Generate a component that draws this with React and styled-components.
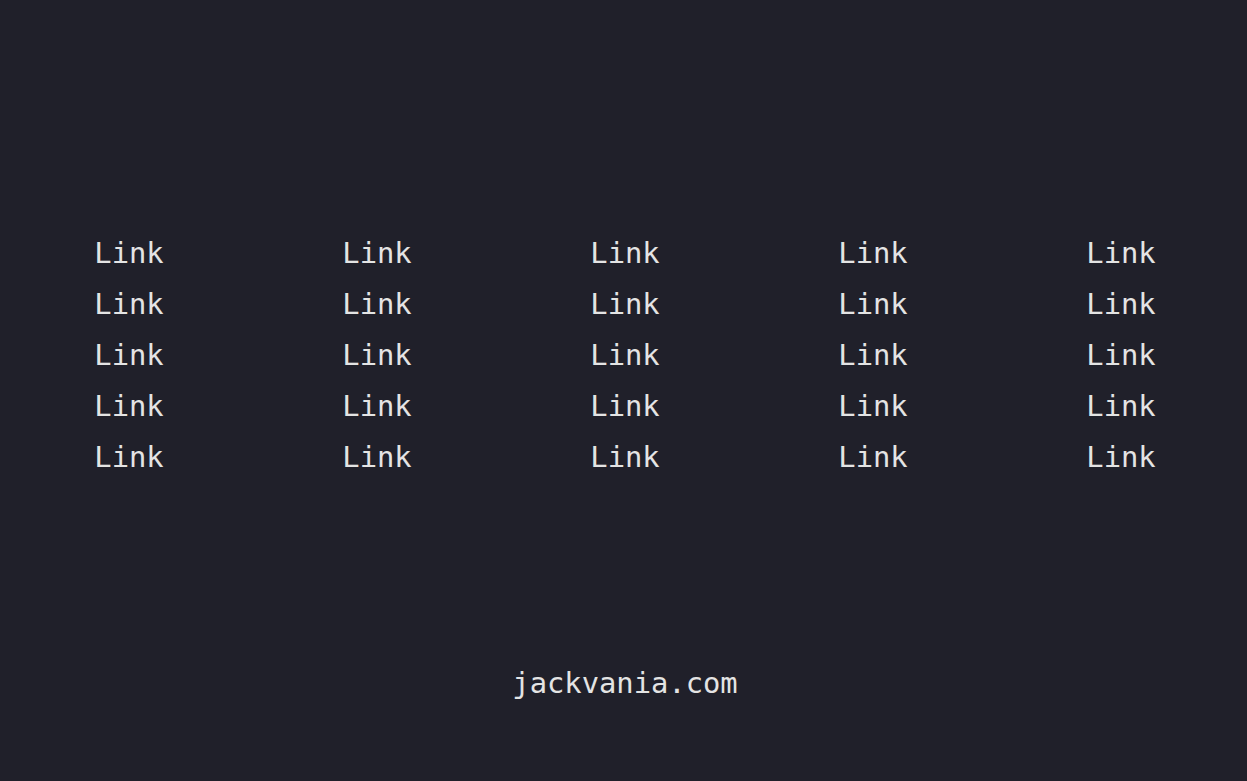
import React from 'react';
import styled, { createGlobalStyle } from 'styled-components';

const GlobalStyle = createGlobalStyle`
  html, body {
    margin: 0;
    padding: 0;
    background: #20202a;
  }
  body {
    font-family: "DejaVu Sans Mono", "Liberation Mono", monospace;
    color: #e4e4e4;
  }
`;

const Page = styled.div`
  min-height: 100vh;
  display: flex;
  flex-direction: column;
  box-sizing: border-box;
`;

const Main = styled.main`
  flex: 1;
  display: flex;
  align-items: center;
  padding-top: 52px;
`;

const LinkGrid = styled.div`
  width: 100%;
  display: grid;
  grid-template-columns: repeat(5, 1fr);
  padding: 0 2px 0 5px;
  box-sizing: border-box;
`;

const LinkItem = styled.a`
  display: block;
  text-align: center;
  font-size: 28.8px;
  line-height: 51px;
  color: #e4e4e4;
  text-decoration: none;
`;

const Footer = styled.footer`
  text-align: center;
  font-size: 28.8px;
  line-height: 51px;
  padding: 0 0 72px 3px;
`;

function App() {
  const links = Array.from({ length: 25 }, (_, i) => i);

  return (
    <>
      <GlobalStyle />
      <Page>
        <Main>
          <LinkGrid>
            {links.map((i) => (
              <LinkItem key={i} href="#">Link</LinkItem>
            ))}
          </LinkGrid>
        </Main>
        <Footer>jackvania.com</Footer>
      </Page>
    </>
  );
}

export default App;
